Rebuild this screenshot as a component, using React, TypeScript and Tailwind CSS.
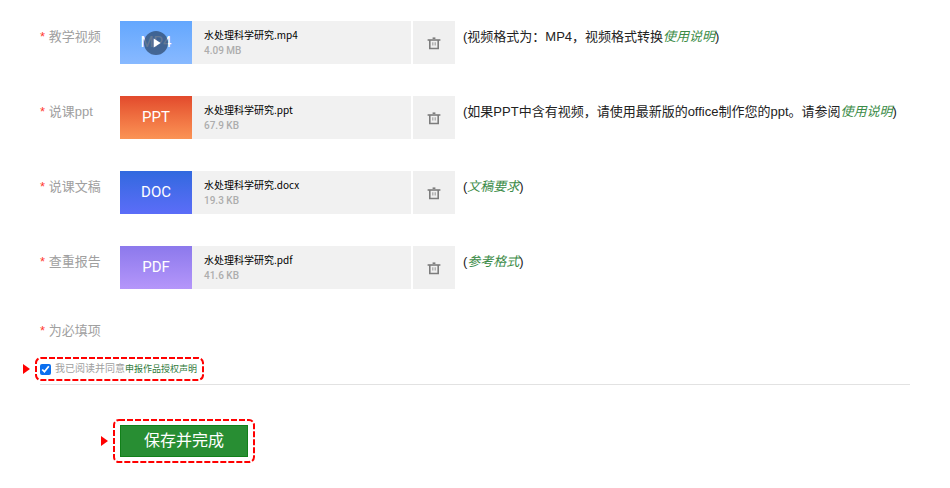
import { useState } from 'react'
import type { ReactNode } from 'react'

type Upload = {
  id: string
  label: string
  kind: string
  thumb: string
  name: string
  size: string
  video?: boolean
  hint: string
  link: string
}

const uploads: Upload[] = [
  {
    id: 'video',
    label: '教学视频',
    kind: 'MP4',
    thumb: 'from-[#63a7fe] to-[#88b9ff]',
    name: '水处理科学研究.mp4',
    size: '4.09 MB',
    video: true,
    hint: '视频格式为：MP4，视频格式转换',
    link: '使用说明',
  },
  {
    id: 'ppt',
    label: '说课ppt',
    kind: 'PPT',
    thumb: 'from-[#e2492c] to-[#fb9355]',
    name: '水处理科学研究.ppt',
    size: '67.9 KB',
    hint: '如果PPT中含有视频，请使用最新版的office制作您的ppt。请参阅',
    link: '使用说明',
  },
  {
    id: 'doc',
    label: '说课文稿',
    kind: 'DOC',
    thumb: 'from-[#3069df] to-[#5b6df8]',
    name: '水处理科学研究.docx',
    size: '19.3 KB',
    hint: '',
    link: '文稿要求',
  },
  {
    id: 'pdf',
    label: '查重报告',
    kind: 'PDF',
    thumb: 'from-[#8c79ec] to-[#b596fa]',
    name: '水处理科学研究.pdf',
    size: '41.6 KB',
    hint: '',
    link: '参考格式',
  },
]

function TrashIcon() {
  return (
    <svg width="14" height="14" viewBox="0 0 14 14" fill="none" stroke="#7d7d7d" aria-hidden="true">
      <path d="M0.6 4h12.8" strokeWidth="1.6" />
      <path d="M5.6 2.2h2.8" strokeWidth="1.6" />
      <path d="M2.8 4v8.5h8.4V4" strokeWidth="1.6" />
      <path d="M5.8 6.2v3.2M8.2 6.2v3.2" stroke="#a3a3a3" strokeWidth="1.2" />
    </svg>
  )
}

function PlayIcon() {
  return (
    <svg width="24" height="24" viewBox="0 0 24 24" aria-hidden="true">
      <circle cx="12" cy="12" r="12" fill="#2f4a6e" fillOpacity="0.74" />
      <path d="M9.7 7.6v8.8l7-4.4z" fill="#fff" />
    </svg>
  )
}

// Red dashed frame with a pointer on its left
function Callout({ children, className }: { children: ReactNode; className: string }) {
  return (
    <div className="flex items-center">
      <svg width="7" height="10" viewBox="0 0 7 10" className="mr-[5px] shrink-0" aria-hidden="true">
        <path d="M0 0l7 5-7 5z" fill="#ff0000" />
      </svg>
      <div className={`relative flex items-center ${className}`}>
        <svg className="pointer-events-none absolute inset-0 h-full w-full" aria-hidden="true">
          <rect
            x="1"
            y="1"
            rx="5"
            className="h-[calc(100%-2px)] w-[calc(100%-2px)]"
            fill="none"
            stroke="#ff0000"
            strokeWidth="2"
            strokeDasharray="6 2"
          />
        </svg>
        {children}
      </div>
    </div>
  )
}

function UploadRow({ item, onRemove }: { item: Upload; onRemove: () => void }) {
  return (
    <li className="flex items-start">
      <p className="w-20 shrink-0 pt-1.5 leading-5 text-[#a0a0a0]">
        <span className="text-[#ff3b30]">*</span> {item.label}
      </p>
      <div className="flex h-[43px] shrink-0">
        <div
          className={`relative flex w-18 items-center justify-center bg-linear-to-b font-[Roboto,sans-serif] text-[15px] text-white ${item.thumb}`}
        >
          {item.kind}
          {item.video && (
            <button type="button" aria-label="播放" className="absolute inset-0 flex items-center justify-center">
              <PlayIcon />
            </button>
          )}
        </div>
        <div className="w-[219px] bg-[#f1f1f1] pt-2 pl-3">
          <p className="font-['Noto_Sans_CJK_SC',sans-serif] text-[10px] leading-3 text-black">{item.name}</p>
          <p className="mt-0.5 font-[Roboto,sans-serif] text-[10px] leading-4 font-medium text-[#adadad]">
            {item.size}
          </p>
        </div>
        <button
          type="button"
          aria-label={`删除${item.label}`}
          onClick={onRemove}
          className="ml-0.5 flex w-[42px] items-center justify-center bg-[#f0f0f0]"
        >
          <TrashIcon />
        </button>
      </div>
      <p className="min-w-0 pt-1.5 pl-2 leading-5 text-[#222]">
        ({item.hint}
        <a href="#" className="text-[#3c8c48] italic">
          {item.link}
        </a>
        )
      </p>
    </li>
  )
}

export default function App() {
  const [items, setItems] = useState(uploads)
  const [agreed, setAgreed] = useState(true)

  return (
    <form
      onSubmit={(e) => e.preventDefault()}
      className="bg-white pt-[21px] pb-6 font-['Liberation_Sans','Noto_Sans_CJK_SC',sans-serif] text-[13px]"
    >
      <ul className="flex flex-col gap-8 pl-10">
        {items.map((item) => (
          <UploadRow
            key={item.id}
            item={item}
            onRemove={() => setItems(items.filter((i) => i.id !== item.id))}
          />
        ))}
      </ul>

      <p className="mt-8 pl-10 leading-5 text-[#a0a0a0]">
        <span className="text-[#ff3b30]">*</span> 为必填项
      </p>

      <div className="mt-4 pl-[23px]">
        <Callout className="h-6 pr-[7px] pl-[5px]">
          <input
            id="agree"
            type="checkbox"
            checked={agreed}
            onChange={(e) => setAgreed(e.target.checked)}
            className="h-[11px] w-[11px] accent-[#0b6fee]"
          />
          <label htmlFor="agree" className="ml-1 text-[10px] leading-4 whitespace-nowrap text-[#a0a0a0]">
            我已阅读并同意
            <a href="#" className="text-[9px] text-[#2f7a3a]">
              申报作品授权声明
            </a>
          </label>
        </Callout>
      </div>

      <hr className="mt-[3px] mr-10 ml-10 border-t border-[#e2e2e2]" />

      <div className="mt-[34px] pl-[101px]">
        <Callout className="px-[7px] py-1.5">
          <button
            type="submit"
            className="h-8 w-32 border border-[#118019] bg-[#288e33] text-[16px] leading-5 text-white"
          >
            保存并完成
          </button>
        </Callout>
      </div>
    </form>
  )
}
